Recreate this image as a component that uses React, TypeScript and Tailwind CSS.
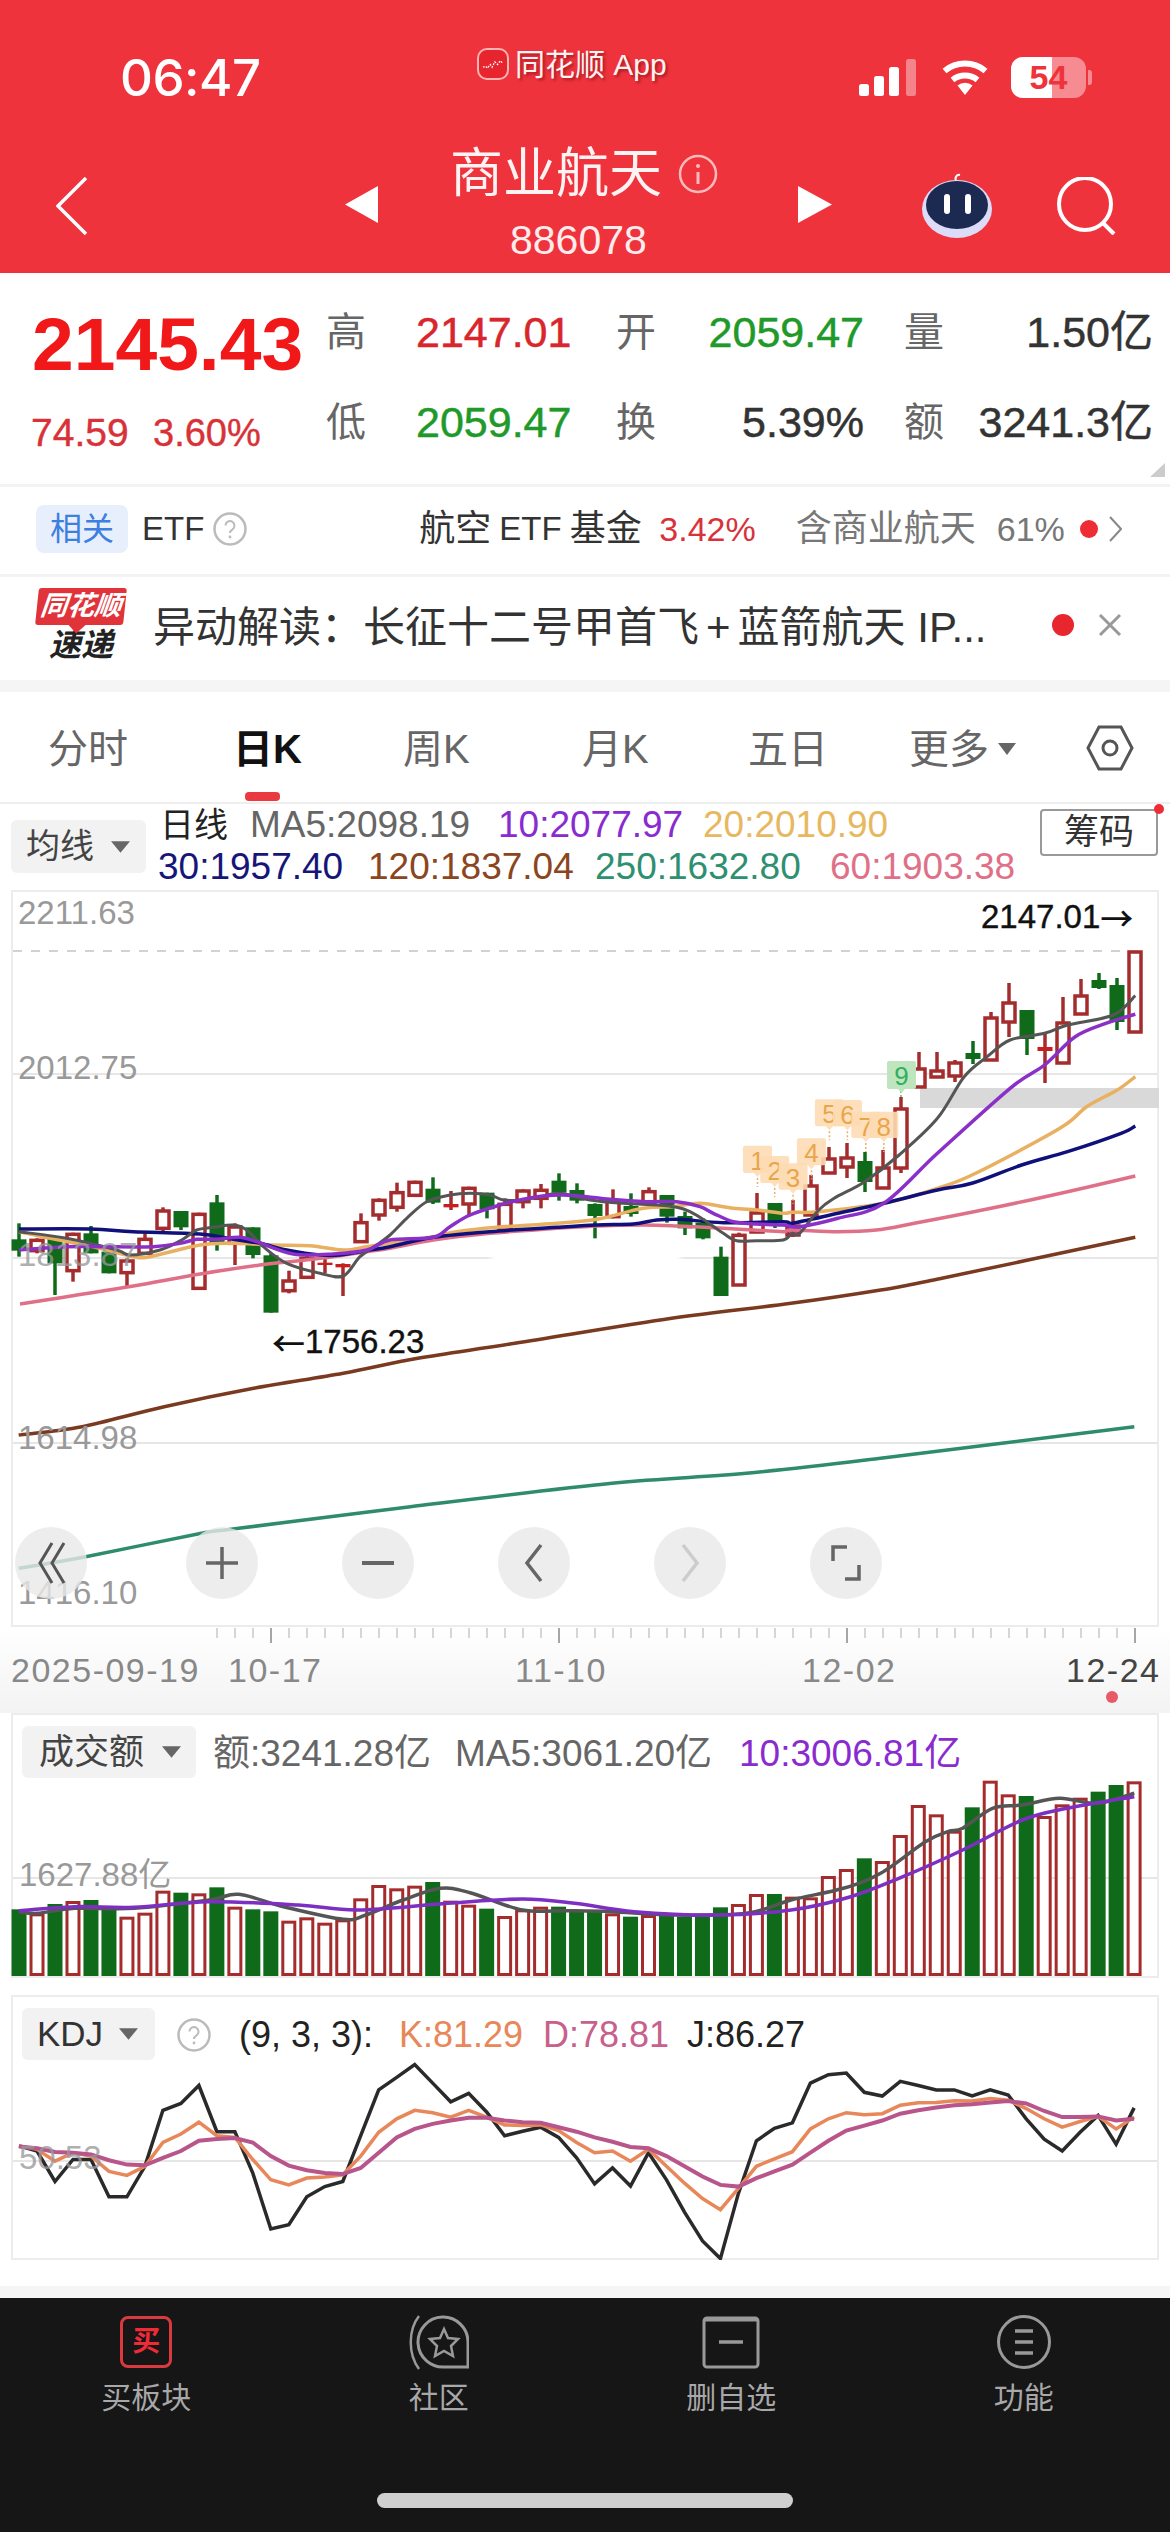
import React from "react";

type P = [number, number];
const z8 = (a: number[]): P[] => pairs(a).map(([x, y]) => [x / 3, 1150 + y / 3]);
const z9 = (a: number[]): P[] => pairs(a).map(([x, y]) => [390 + x / 3, 1150 + y / 3]);
const z4 = (a: number[]): P[] => pairs(a).map(([x, y]) => [570 + x / 2.613, 880 + y / 3]);
const z5 = (a: number[]): P[] => pairs(a).map(([x, y]) => [x / 1.34, 1280 + y / 3]);
const z6 = (a: number[]): P[] => pairs(a).map(([x, y]) => [x / 1.34, 1700 + y / 3]);
const z7 = (a: number[]): P[] => pairs(a).map(([x, y]) => [x / 1.34, 2000 + y / 2.947]);
function pairs(a: number[]): P[] {
  const r: P[] = [];
  for (let i = 0; i < a.length; i += 2) r.push([a[i], a[i + 1]]);
  return r;
}
function smooth(p: P[]): string {
  let d = `M${p[0][0].toFixed(1)} ${p[0][1].toFixed(1)}`;
  for (let i = 0; i < p.length - 1; i++) {
    const a = p[Math.max(0, i - 1)], b = p[i], c = p[i + 1], e = p[Math.min(p.length - 1, i + 2)];
    const c1: P = [b[0] + (c[0] - a[0]) / 6, b[1] + (c[1] - a[1]) / 6];
    const c2: P = [c[0] - (e[0] - b[0]) / 6, c[1] - (e[1] - b[1]) / 6];
    d += `C${c1[0].toFixed(1)} ${c1[1].toFixed(1)} ${c2[0].toFixed(1)} ${c2[1].toFixed(1)} ${c[0].toFixed(1)} ${c[1].toFixed(1)}`;
  }
  return d;
}
const poly = (p: P[]) => p.map(([x, y]) => `${x.toFixed(1)},${y.toFixed(1)}`).join(" ");

const RED = "#a52c2c";
const GREEN = "#0f6b1a";

const c1: [string, number, number, number, number][] = [
  ["G", 220, 268, 302, 320], ["R", 265, 268, 302, 310], ["G", 258, 265, 340, 435], ["R", 248, 250, 362, 395],
  ["G", 228, 250, 310, 310], ["G", 305, 305, 370, 370], ["R", 325, 330, 368, 410], ["R", 250, 265, 310, 315],
  ["R", 172, 180, 235, 245], ["G", 183, 183, 232, 240], ["R", 188, 190, 415, 415], ["G", 135, 157, 280, 302],
  ["R", 220, 228, 280, 345], ["G", 232, 232, 315, 325], ["G", 310, 316, 488, 488], ["R", 362, 390, 422, 430],
  ["R", 318, 322, 382, 385], ["X", 325, 338, 345, 370], ["X", 340, 342, 352, 438], ["R", 190, 215, 275, 278],
  ["R", 145, 148, 195, 212], ["R", 98, 125, 172, 185], ["R", 92, 94, 136, 140], ["G", 82, 116, 158, 162],
  ["X", 123, 162, 172, 180], ["R", 110, 112, 162, 200], ["G", 128, 128, 178, 205], ["R", 145, 160, 240, 242],
  ["R", 118, 120, 155, 175], ["R", 102, 118, 145, 175], ["G", 70, 92, 128, 152], ["G", 100, 120, 152, 160],
  ["G", 160, 162, 198, 265], ["R", 118, 150, 200, 205], ["G", 130, 168, 192, 200], ["R", 112, 122, 160, 165],
  ["G", 135, 135, 200, 218], ["G", 185, 198, 235, 255], ["G", 205, 218, 265, 268], ["G", 290, 320, 438, 438],
  ["R", 248, 253, 405, 408],
];
const c2: [string, number, number, number, number][] = [
  ["R", 1193, 1212, 1232, 1233], ["G", 1203, 1203, 1223, 1228], ["M", 1200, 1225, 1235, 1237], ["R", 1175, 1185, 1215, 1215],
  ["R", 1147, 1158, 1173, 1173], ["R", 1143, 1157, 1167, 1178], ["G", 1152, 1161, 1182, 1192], ["R", 1150, 1167, 1188, 1188],
  ["R", 1097, 1108, 1168, 1173], ["R", 1052, 1068, 1087, 1087], ["R", 1052, 1070, 1077, 1077], ["R", 1060, 1062, 1076, 1082],
  ["G", 1041, 1053, 1059, 1064], ["R", 1012, 1017, 1060, 1060], ["R", 983, 1002, 1022, 1037], ["G", 1010, 1010, 1039, 1055],
  ["X", 1033, 1047, 1051, 1083], ["R", 997, 1022, 1063, 1063], ["R", 979, 995, 1014, 1014], ["G", 973, 980, 988, 989],
  ["G", 978, 985, 1022, 1030], ["R", 951, 951, 1032, 1032],
];
const candles = [
  ...c1.map(([k, a, b, c, d]) => [k, 1150 + a / 3, 1150 + b / 3, 1150 + c / 3, 1150 + d / 3] as [string, number, number, number, number]),
  ...c2,
];

const ma5 = [
  ...z8([57, 245, 200, 265, 350, 300, 390, 315, 480, 300, 545, 270, 590, 240, 640, 232, 700, 225, 740, 240, 790, 290, 860, 340, 960, 370, 1030, 378, 1080, 320, 1130, 285]),
  ...z9([0, 255, 50, 205, 110, 155, 180, 135, 240, 130, 300, 135, 340, 150, 400, 150, 450, 140, 510, 130, 600, 150, 700, 160, 800, 165, 860, 172, 900, 185, 950, 215, 1000, 250, 1040, 272, 1100, 272, 1180, 270]),
  ...z4([580, 1060, 600, 1060, 650, 990, 690, 955, 770, 905, 860, 825, 960, 715, 1030, 590, 1090, 530, 1150, 480, 1240, 460, 1300, 435, 1420, 405, 1477, 347]),
];
const ma10 = [
  ...z8([57, 300, 200, 290, 300, 290, 460, 290, 540, 280, 590, 268, 650, 268, 720, 262, 770, 275, 880, 312, 1000, 312, 1100, 300]),
  ...z9([0, 270, 130, 262, 180, 230, 240, 195, 330, 165, 400, 148, 460, 138, 520, 135, 590, 140, 660, 148, 770, 155, 860, 155, 930, 170, 970, 190, 1030, 215, 1100, 222, 1180, 225]),
  ...z4([600, 1040, 700, 1015, 820, 970, 960, 820, 1150, 625, 1240, 555, 1320, 470, 1400, 430, 1477, 403]),
];
const ma20 = [
  ...z8([57, 245, 150, 265, 280, 290, 400, 320, 450, 320, 600, 285, 700, 280, 820, 285, 930, 287, 1030, 300, 1100, 290]),
  ...z9([0, 280, 130, 260, 200, 245, 320, 232, 500, 220, 620, 208, 760, 175, 850, 170, 930, 160, 1030, 175, 1100, 180, 1180, 190]),
  ...z4([580, 997, 650, 995, 820, 970, 960, 925, 1060, 880, 1280, 745, 1350, 680, 1430, 630, 1477, 590]),
];
const ma30 = [
  ...z8([57, 237, 270, 237, 400, 245, 600, 252, 700, 268, 780, 280, 860, 300, 960, 315, 1020, 315, 1100, 302]),
  ...z9([0, 290, 130, 262, 300, 245, 500, 232, 620, 225, 730, 222, 800, 210, 870, 208, 1000, 218, 1180, 215]),
  ...z4([580, 1030, 700, 1000, 820, 970, 960, 930, 1050, 910, 1180, 855, 1300, 815, 1440, 760, 1477, 738]),
];
const ma60 = [
  ...z8([60, 462, 200, 440, 400, 408, 600, 372, 780, 345, 870, 335, 1000, 320, 1100, 305]),
  ...z9([0, 295, 130, 270, 300, 250, 500, 235, 620, 228, 760, 225, 860, 228, 1000, 235, 1090, 240, 1180, 245]),
  ...z4([580, 1050, 700, 1055, 800, 1050, 900, 1030, 1100, 985, 1300, 935, 1477, 888]),
];
const ma120 = [
  ...z5([25, 465, 110, 440, 220, 380, 340, 325, 460, 280, 560, 235, 690, 190, 900, 115, 1060, 70, 1180, 30]),
  ...z4([950, 1200, 1477, 1072]),
];
const ma250 = z5([25, 865, 115, 830, 270, 760, 320, 745, 550, 680, 820, 610, 1000, 580, 1180, 535, 1520, 440]);

const tags: [number, number, number, string][] = [
  [452, 797, 885, "1"], [497, 828, 915, "2"], [545, 850, 935, "3"], [593, 775, 862, "4"],
  [640, 658, 745, "5"], [687, 660, 745, "6"], [735, 695, 780, "7"], [782, 695, 780, "8"],
];

const volTops = [628, 640, 612, 603, 600, 630, 650, 638, 572, 578, 580, 562, 620, 628, 634, 662, 652, 668, 658, 595, 555, 565, 557, 546, 602, 614, 626, 648, 628, 620, 620, 632, 632, 640, 650, 645, 648, 650, 650, 622, 612, 582, 582, 590, 592, 528, 507, 475, 483, 405, 315, 343, 392, 322, 242, 283, 288, 348, 313, 293, 275, 255, 244];
const volGreen = new Set([0, 2, 4, 5, 9, 11, 13, 14, 23, 26, 30, 31, 32, 34, 36, 37, 38, 39, 42, 47, 53, 56, 60, 61]);
const volMa5 = z6([25, 635, 50, 640, 100, 625, 180, 625, 280, 600, 320, 583, 380, 620, 460, 658, 490, 645, 540, 600, 590, 565, 630, 578, 700, 630, 760, 632, 820, 635, 900, 645, 1000, 640, 1060, 600, 1130, 565, 1180, 520, 1240, 425, 1270, 395, 1290, 385, 1330, 325, 1370, 315, 1420, 295, 1470, 310, 1520, 280]);
const volMa10 = z6([25, 632, 100, 620, 180, 622, 280, 605, 400, 615, 480, 630, 600, 610, 700, 597, 770, 610, 850, 635, 960, 645, 1060, 630, 1140, 590, 1210, 530, 1290, 450, 1370, 360, 1430, 325, 1520, 290]);

const kx = (i: number) => 25.5 + 24.1 * i;
const zipK = (ys: number[]) => z7(ys.flatMap((y, i) => [kx(i), y]));
const kJ = zipK([430, 445, 535, 470, 470, 580, 580, 490, 325, 305, 252, 388, 388, 510, 675, 662, 580, 550, 535, 400, 265, 228, 190, 245, 300, 275, 330, 400, 387, 375, 405, 465, 542, 495, 548, 450, 530, 625, 710, 762, 570, 415, 378, 362, 245, 220, 215, 272, 283, 240, 252, 265, 265, 283, 265, 280, 350, 410, 445, 390, 340, 425, 318]);
const kK = zipK([430, 440, 475, 450, 460, 505, 517, 490, 420, 395, 360, 400, 405, 470, 530, 545, 525, 522, 515, 460, 390, 350, 325, 332, 345, 325, 345, 368, 370, 368, 385, 420, 450, 445, 475, 440, 490, 540, 585, 618, 555, 490, 468, 447, 380, 350, 332, 338, 335, 310, 303, 302, 297, 298, 290, 295, 320, 350, 375, 358, 343, 380, 345]);
const kD = zipK([432, 437, 448, 450, 455, 472, 485, 487, 465, 445, 415, 410, 407, 420, 460, 488, 502, 510, 513, 495, 450, 405, 380, 365, 355, 347, 347, 355, 360, 362, 375, 388, 405, 418, 433, 437, 460, 490, 520, 545, 550, 525, 505, 485, 450, 415, 385, 370, 355, 335, 325, 317, 310, 307, 302, 298, 305, 327, 345, 345, 343, 355, 350]);

function Tri({ className }: { className: string }) {
  return (
    <svg viewBox="0 0 20 12" className={className}>
      <path d="M0 0H20L10 12Z" fill="#666" />
    </svg>
  );
}

function Help({ className }: { className: string }) {
  return (
    <svg viewBox="0 0 34 34" className={className}>
      <circle cx="17" cy="17" r="15.5" fill="none" stroke="#bbb" strokeWidth="2.5" />
      <path d="M12.5 13.5a4.5 4.5 0 1 1 7 3.8c-1.6 1-2.5 1.8-2.5 3.7" fill="none" stroke="#bbb" strokeWidth="2" />
      <circle cx="17" cy="25" r="1.4" fill="#bbb" />
    </svg>
  );
}

function Header() {
  return (
    <header className="h-[273px] bg-[#ef333d] text-white">
      <div className="flex h-[120px] items-start">
        <div className="ml-[120px] mt-[50px] w-[357px] text-[51px] leading-[56px] font-medium font-['Inter','Liberation_Sans',sans-serif] tracking-[-0.5px]">06:47</div>
        <div className="mt-[48px] flex items-start">
          <div className="flex h-[32px] w-[32px] items-center justify-center rounded-[10px] border-2 border-[#ffb3b3] bg-[#e7252f]">
            <svg viewBox="0 0 24 12" className="w-[22px]">
              <path d="M1 9l3-1 2 2 3-4 2 3 3-6 3 3 3-4 2 2" fill="none" stroke="#fff" strokeWidth="1.4" strokeDasharray="2 1.5" />
            </svg>
          </div>
          <div className="ml-[6px] text-[30px] leading-[34px] text-[#fff3f3] [text-shadow:2px_2px_3px_rgba(90,0,0,0.5)]">同花顺 App</div>
        </div>
        <div className="ml-auto mr-[78px] mt-[57px] flex items-start">
          <svg viewBox="0 0 57 37" className="mt-[2px] h-[37px] w-[57px]">
            <rect x="0" y="25" width="10" height="12" rx="2.5" fill="#fff" />
            <rect x="15" y="17" width="10" height="20" rx="2.5" fill="#fff" />
            <rect x="30" y="8" width="10" height="29" rx="2.5" fill="#fff" />
            <rect x="47" y="0" width="10" height="37" rx="2.5" fill="#fff" fillOpacity="0.4" />
          </svg>
          <svg viewBox="0 0 48 36" className="ml-[25px] mt-[2px] h-[36px] w-[48px]">
            <path d="M24 36L16.5 26.5a12 12 0 0 1 15 0Z" fill="#fff" />
            <path d="M11.5 21a20 20 0 0 1 25 0" fill="none" stroke="#fff" strokeWidth="6" />
            <path d="M3.5 12a32 32 0 0 1 41 0" fill="none" stroke="#fff" strokeWidth="6" />
          </svg>
          <div className="relative ml-[22px] h-[41px] w-[75px] overflow-hidden rounded-[12px] bg-[#ffffff70]">
            <div className="h-full w-[41px] bg-white"></div>
            <div className="absolute inset-0 text-center text-[34px] font-bold leading-[41px] text-[#ef333d]">54</div>
          </div>
          <div className="ml-[2px] mt-[13px] h-[15px] w-[4px] rounded-r-[3px] bg-[#ffffff70]"></div>
        </div>
      </div>
      <div className="flex h-[153px] items-start">
        <svg viewBox="0 0 31 58" className="ml-[56px] mt-[57px] h-[58px] w-[31px]">
          <path d="M30 1L2 29l28 28" fill="none" stroke="#fff" strokeWidth="3.5" />
        </svg>
        <svg viewBox="0 0 33 37" className="ml-[258px] mt-[66px] h-[37px] w-[33px]">
          <path d="M33 0V37L0 18.5Z" fill="#fff" />
        </svg>
        <div className="ml-[72px] flex w-[348px] flex-col">
          <div className="mt-[24px] flex items-center">
            <span className="text-[53px] leading-[60px] text-[#fff2f2]">商业航天</span>
            <svg viewBox="0 0 40 40" className="ml-[16px] h-[40px] w-[40px]">
              <circle cx="20" cy="20" r="18" fill="none" stroke="#fbb" strokeWidth="2.5" />
              <path d="M20 18v12" stroke="#fbb" strokeWidth="3" />
              <circle cx="20" cy="12" r="2" fill="#fbb" />
            </svg>
          </div>
          <div className="ml-[60px] mt-[12px] text-[41px] leading-[48px] text-[#ffecec]">886078</div>
        </div>
        <svg viewBox="0 0 34 37" className="mt-[66px] h-[37px] w-[34px]">
          <path d="M0 0V37L34 18.5Z" fill="#fff" />
        </svg>
        <svg viewBox="0 0 70 66" className="ml-[90px] mt-[52px] h-[66px] w-[70px]">
          <path d="M35 10c-3-3-1-8 3-7" fill="none" stroke="#fff" strokeWidth="2" />
          <ellipse cx="35" cy="37" rx="35" ry="29" fill="#dcdcf8" />
          <ellipse cx="35" cy="33" rx="31" ry="24" fill="#1c2a52" />
          <rect x="22" y="22" width="6" height="20" rx="3" fill="#fff" />
          <rect x="43" y="22" width="6" height="20" rx="3" fill="#fff" />
        </svg>
        <svg viewBox="0 0 60 58" className="ml-[64px] mt-[57px] h-[58px] w-[60px]">
          <circle cx="29" cy="27" r="26" fill="none" stroke="#fff" strokeWidth="4" />
          <path d="M47 46l11 11" stroke="#fff" strokeWidth="4" />
        </svg>
      </div>
    </header>
  );
}

function Quote() {
  const label = "text-[40px] leading-[48px] text-[#666]";
  const val = "text-[43px] leading-[48px] [-webkit-text-stroke:0.5px]";
  return (
    <section className="relative flex h-[211px] bg-white">
      <div className="ml-[31px] w-[295px]">
        <div className="mt-[31px] ml-[1px] text-[75px] font-bold leading-[80px] text-[#f01818]">2145.43</div>
        <div className="mt-[27px] flex text-[39px] leading-[44px] text-[#d83238] [-webkit-text-stroke:0.4px]">
          <span className="w-[122px]">74.59</span>
          <span className="text-[38px]">3.60%</span>
        </div>
      </div>
      <div className="mt-[35px] grid grid-cols-[90px_200px_90px_158px_289px] grid-rows-[90px_48px]">
        <div className={label}>高</div>
        <div className={`${val} text-[#d8262c]`}>2147.01</div>
        <div className={label}>开</div>
        <div className={`${val} text-right text-[#1f9a2a]`}>2059.47</div>
        <div className="flex justify-between pl-[40px]">
          <span className={label}>量</span>
          <span className={`${val} text-[#333]`}>1.50亿</span>
        </div>
        <div className={label}>低</div>
        <div className={`${val} text-[#1f9a2a]`}>2059.47</div>
        <div className={label}>换</div>
        <div className={`${val} text-right text-[#333]`}>5.39%</div>
        <div className="flex justify-between pl-[40px]">
          <span className={label}>额</span>
          <span className={`${val} text-[#333]`}>3241.3亿</span>
        </div>
      </div>
      <svg viewBox="0 0 15 14" className="absolute bottom-[7px] right-[5px] h-[14px] w-[15px]">
        <path d="M15 0V14H0Z" fill="#ccc" />
      </svg>
    </section>
  );
}

function EtfRow() {
  return (
    <section className="flex h-[90px] items-center border-t-[3px] border-[#f3f3f3] bg-white pb-[3px]">
      <div className="ml-[36px] flex h-[48px] w-[92px] items-center justify-center rounded-[8px] bg-[#e8effc] text-[32px] text-[#3d7fe0]">相关</div>
      <div className="ml-[14px] text-[33px] text-[#333]">ETF</div>
      <Help className="ml-[9px] h-[34px] w-[34px]" />
      <div className="ml-[172px] flex w-[240px] items-center text-[36px] whitespace-nowrap text-[#333]">
        航空<span className="mx-[8px] text-[33px]">ETF</span>基金
      </div>
      <div className="text-[34px] text-[#d8323a]">3.42%</div>
      <div className="ml-[40px] w-[201px] text-[36px] text-[#777]">含商业航天</div>
      <div className="text-[34px] text-[#777]">61%</div>
      <div className="ml-[15px] h-[18px] w-[18px] rounded-full bg-[#ef2b35]"></div>
      <svg viewBox="0 0 13 26" className="ml-[11px] h-[26px] w-[13px]">
        <path d="M1 1l11 12L1 25" fill="none" stroke="#888" strokeWidth="2" />
      </svg>
    </section>
  );
}

function AlertRow() {
  return (
    <section className="flex h-[106px] items-start border-t-[3px] border-[#f3f3f3] bg-white">
      <div className="ml-[37px] mt-[11px] flex w-[88px] flex-col items-center">
        <div className="relative h-[37px] w-[88px] -skew-x-6 rounded-[3px] bg-[#e0333a] text-center text-[27px] font-bold italic leading-[37px] text-white whitespace-nowrap">
          同花顺
          <span className="absolute -bottom-[6px] left-[36px] h-[12px] w-[12px] rotate-45 bg-[#e0333a]"></span>
        </div>
        <div className="mt-[6px] text-[32px] font-bold italic leading-[28px] text-[#222]">速递</div>
      </div>
      <div className="ml-[28px] mt-[28px] w-[850px] text-[42px] leading-[46px] whitespace-nowrap text-[#333]">
        异动解读：长征十二号甲首飞<span className="mx-[7px]">+</span>蓝箭航天 IP...
      </div>
      <div className="ml-[49px] mt-[37px] h-[22px] w-[22px] shrink-0 rounded-full bg-[#e8262e]"></div>
      <svg viewBox="0 0 24 24" className="ml-[24px] mt-[36px] h-[24px] w-[24px] shrink-0">
        <path d="M2 2l20 20M22 2L2 22" stroke="#999" strokeWidth="3" />
      </svg>
    </section>
  );
}

function Tabs() {
  const t = "text-[40px] leading-[48px] text-[#666]";
  return (
    <section className="relative flex h-[112px] items-start border-b-2 border-[#eee] bg-white pl-[48px] pt-[33px]">
      <div className={`w-[185px] ${t}`}>分时</div>
      <div className="w-[170px] text-[40px] font-bold leading-[48px] text-[#111]">日K</div>
      <div className={`w-[179px] ${t}`}>周K</div>
      <div className={`w-[166px] ${t}`}>月K</div>
      <div className={`w-[161px] ${t}`}>五日</div>
      <div className={`flex w-[177px] items-center ${t}`}>
        更多
        <svg viewBox="0 0 18 12" className="ml-[9px] h-[12px] w-[18px]">
          <path d="M0 0H18L9 12Z" fill="#666" />
        </svg>
      </div>
      <svg viewBox="0 0 48 46" className="h-[46px] w-[48px]">
        <path d="M13 2h22l11 21-11 21H13L2 23Z" fill="none" stroke="#555" strokeWidth="3" />
        <circle cx="24" cy="23" r="7" fill="none" stroke="#555" strokeWidth="3" />
      </svg>
      <div className="absolute bottom-[1px] left-[245px] h-[9px] w-[35px] rounded-[4px] bg-[#e93a3f]"></div>
    </section>
  );
}

function MaHeader() {
  return (
    <section className="relative flex h-[86px] items-start bg-white">
      <div className="ml-[11px] mt-[16px] flex h-[53px] w-[135px] items-center rounded-[6px] bg-[#f2f2f2] pl-[15px] text-[34px] text-[#444]">
        均线
        <Tri className="ml-[17px] h-[12px] w-[19px]" />
      </div>
      <div className="ml-[12px] text-[37px] leading-[42px] whitespace-nowrap">
        <div className="flex">
          <span className="w-[92px] pl-[2px] text-[34px] text-[#222]">日线</span>
          <span className="w-[248px] text-[#666]">MA5:2098.19</span>
          <span className="w-[205px] text-[#8a2bd0]">10:2077.97</span>
          <span className="text-[#e8b860]">20:2010.90</span>
        </div>
        <div className="flex">
          <span className="w-[210px] text-[#16167a]">30:1957.40</span>
          <span className="w-[227px] text-[#8b4520]">120:1837.04</span>
          <span className="w-[235px] text-[#2e9070]">250:1632.80</span>
          <span className="text-[#e07088]">60:1903.38</span>
        </div>
      </div>
      <div className="absolute left-[1040px] top-[5px] flex h-[47px] w-[118px] items-center justify-center rounded-[4px] border-2 border-[#999] text-[35px] text-[#333]">筹码</div>
      <div className="absolute left-[1154px] top-[0px] h-[10px] w-[10px] rounded-full bg-[#ef2b35]"></div>
    </section>
  );
}

const ctrlBtn = "absolute top-[637px] flex h-[72px] w-[72px] items-center justify-center rounded-full bg-[#e8e8e8cc]";

function MainChart() {
  return (
    <section className="relative ml-[11px] h-[737px] w-[1148px] overflow-hidden bg-white outline-2 -outline-offset-2 outline-[#ececec]">
      <svg viewBox="11 890 1148 737" className="absolute left-0 top-0 h-[737px] w-[1148px]">
        <path d="M13 1074H1157M13 1258H1157M13 1443H1157" stroke="#e6e6e6" strokeWidth="2" />
        <path d="M13 951H1145" stroke="#c9c3b8" strokeWidth="1.5" strokeDasharray="9 9" />
        <rect x="920" y="1088" width="239" height="20" fill="#d9d9d9" />
        <g>
          {candles.map(([k, a, b, c, d], i) => {
            const x = 19 + 18 * i;
            if (k === "G")
              return (
                <g key={i}>
                  <line x1={x} x2={x} y1={a} y2={d} stroke={GREEN} strokeWidth="3.500" />
                  <rect x={x - 7.5} y={b} width="15" height={c - b} fill={GREEN} />
                </g>
              );
            if (k === "X")
              return (
                <g key={i}>
                  <line x1={x} x2={x} y1={a} y2={d} stroke={RED} strokeWidth="3.500" />
                  <rect x={x - 7.5} y={b} width="15" height={c - b} fill="#c81e1e" />
                </g>
              );
            return (
              <g key={i}>
                <line x1={x} x2={x} y1={a} y2={b} stroke={RED} strokeWidth="3.500" />
                <line x1={x} x2={x} y1={c} y2={d} stroke={RED} strokeWidth="3.500" />
                <rect x={x - 6} y={b + 1} width="12" height={c - b - 1} fill={k === "M" ? "#d63aa0" : "#fff"} stroke={RED} strokeWidth="3.500" />
              </g>
            );
          })}
        </g>
        <path d={smooth(ma250)} fill="none" stroke="#2e8b6e" strokeWidth="3.500" />
        <path d={smooth(ma120)} fill="none" stroke="#7a3a20" strokeWidth="3.500" />
        <path d={smooth(ma60)} fill="none" stroke="#e07088" strokeWidth="3.500" />
        <path d={smooth(ma20)} fill="none" stroke="#e8b060" strokeWidth="3.500" />
        <path d={smooth(ma30)} fill="none" stroke="#10107a" strokeWidth="3.500" />
        <path d={smooth(ma5)} fill="none" stroke="#555" strokeWidth="3" />
        <path d={smooth(ma10)} fill="none" stroke="#8a30c8" strokeWidth="3.500" />
        {tags.map(([x, t, b, n]) => {
          const L = 570 + x / 2.613, T = 880 + t / 3, B = 880 + b / 3;
          return (
            <g key={n}>
              <line x1={L + 14.5} x2={L + 14.5} y1={B + 3} y2={B + 12} stroke="#e8b070" strokeWidth="1.5" strokeDasharray="2 2" />
              <path d={`M${L} ${T + 2}q0 -2 2 -2h25q2 0 2 2v${B - T - 6}q0 2 -2 2h-9l-3.500 4 -3.500 -4h-9q-2 0 -2 -2Z`} fill="#fddcb4" fillOpacity="0.9" />
              <text x={L + 14.5} y={T + 24} textAnchor="middle" fontSize="26" fill="#eaa54b" fontFamily="Liberation Sans">{n}</text>
            </g>
          );
        })}
        <g>
          <line x1="901" x2="901" y1="1091" y2="1097" stroke="#5fb56f" strokeWidth="1.5" strokeDasharray="2 2" />
          <path d="M887 1063q0 -2 2 -2h25q2 0 2 2v24q0 2 -2 2h-9l-3.500 4 -3.500 -4h-9q-2 0 -2 -2Z" fill="#bfe5bf" />
          <text x="901.500" y="1085" textAnchor="middle" fontSize="26" fill="#2eb060" fontFamily="Liberation Sans">9</text>
        </g>
      </svg>
      <div className="absolute left-[480px] top-[358px] h-[38px] w-[190px] bg-white blur-[3px]"></div>
      <div className="absolute left-[7px] top-[4px] text-[33px] leading-[38px] text-[#999]">2211.63</div>
      <div className="absolute left-[7px] top-[159px] text-[33px] leading-[38px] text-[#999]">2012.75</div>
      <div className="absolute left-[7px] top-[346px] text-[33px] leading-[38px] text-[#99999ccc]">1813.87</div>
      <div className="absolute left-[7px] top-[529px] text-[33px] leading-[38px] text-[#999]">1614.98</div>
      <div className="absolute left-[7px] top-[684px] text-[33px] leading-[38px] text-[#999]">1416.10</div>
      <div className="absolute left-[970px] top-[8px] flex text-[33px] font-medium leading-[38px] text-[#111] [-webkit-text-stroke:0.4px]">
        2147.01<span className="font-['Noto_Sans_CJK_SC'] [-webkit-text-stroke:0px]">→</span>
      </div>
      <div className="absolute left-[261px] top-[433px] flex text-[33px] font-medium leading-[38px] text-[#111] [-webkit-text-stroke:0.4px]">
        <span className="font-['Noto_Sans_CJK_SC'] [-webkit-text-stroke:0px]">←</span>1756.23
      </div>
      <div className={`${ctrlBtn} left-[4px]`}>
        <svg viewBox="0 0 36 48" className="h-[48px] w-[36px]"><path d="M19 4L7 24l12 20M31 4L19 24l12 20" fill="none" stroke="#555" strokeWidth="3" /></svg>
      </div>
      <div className={`${ctrlBtn} left-[175px]`}>
        <svg viewBox="0 0 36 48" className="h-[48px] w-[36px]"><path d="M18 8v32M2 24h32" fill="none" stroke="#666" strokeWidth="3.500" /></svg>
      </div>
      <div className={`${ctrlBtn} left-[331px]`}>
        <svg viewBox="0 0 36 48" className="h-[48px] w-[36px]"><path d="M2 24h32" fill="none" stroke="#666" strokeWidth="4" /></svg>
      </div>
      <div className={`${ctrlBtn} left-[487px]`}>
        <svg viewBox="0 0 36 48" className="h-[48px] w-[36px]"><path d="M25 6L11 24l14 18" fill="none" stroke="#666" strokeWidth="3.500" /></svg>
      </div>
      <div className={`${ctrlBtn} left-[643px]`}>
        <svg viewBox="0 0 36 48" className="h-[48px] w-[36px]"><path d="M11 6l14 18-14 18" fill="none" stroke="#ccc" strokeWidth="3.500" /></svg>
      </div>
      <div className={`${ctrlBtn} left-[799px]`}>
        <svg viewBox="0 0 36 48" className="h-[48px] w-[36px]"><path d="M19 8H5v14M17 40h14V26" fill="none" stroke="#666" strokeWidth="3.500" /></svg>
      </div>
    </section>
  );
}

function DateAxis() {
  const ticks = Array.from({ length: 52 }, (_, i) => 271 + 18 * (i - 3));
  return (
    <section className="h-[86px] bg-linear-to-b from-white to-[#f3f3f3]">
      <svg viewBox="0 0 1170 16" className="h-[16px] w-[1170px]">
        {ticks.map((x) => {
          const major = (x - 271) % 288 === 0;
          return <line key={x} x1={x} x2={x} y1="1" y2={major ? 16 : 11} stroke={major ? "#888" : "#c8c8c8"} strokeWidth="1.5" />;
        })}
      </svg>
      <div className="ml-[11px] mt-[8px] flex text-[34px] leading-[38px] text-[#888] tracking-[1.5px]">
        <span className="w-[217px]">2025-09-19</span>
        <span className="w-[287px]">10-17</span>
        <span className="w-[287px]">11-10</span>
        <span className="w-[264px]">12-02</span>
        <span className="text-[#444]">12-24</span>
      </div>
      <div className="ml-[1106px] mt-[2px] h-[12px] w-[12px] rounded-full bg-[#e85a68]"></div>
    </section>
  );
}

function VolumeChart() {
  return (
    <section className="relative ml-[11px] h-[265px] w-[1148px] overflow-hidden bg-white outline-2 -outline-offset-2 outline-[#ececec]">
      <svg viewBox="11 1713 1148 265" className="absolute left-0 top-0 h-[265px] w-[1148px]">
        <path d="M13 1878H1157" stroke="#e6e6e6" strokeWidth="2" />
        {volTops.map((t, i) => {
          const x = (25.5 + 24.1 * i) / 1.34;
          const y = 1700 + t / 3;
          return volGreen.has(i) ? (
            <rect key={i} x={x - 7.5} y={y} width="15" height={1976 - y} fill={GREEN} />
          ) : (
            <rect key={i} x={x - 6} y={y + 1.5} width="12" height={1974.5 - y - 1.5} fill="#fff" stroke={RED} strokeWidth="3" />
          );
        })}
        <path d={smooth(volMa5)} fill="none" stroke="#555" strokeWidth="3.500" />
        <path d={smooth(volMa10)} fill="none" stroke="#7c2fc0" strokeWidth="3.500" />
      </svg>
      <div className="absolute left-[11px] top-[13px] flex h-[52px] w-[174px] items-center rounded-[6px] bg-[#f2f2f2] pl-[17px] text-[35px] text-[#444]">
        成交额
        <Tri className="ml-[18px] h-[12px] w-[19px]" />
      </div>
      <div className="absolute left-[202px] top-[22px] flex text-[37px] leading-[38px] whitespace-nowrap text-[#666]">
        <span className="w-[242px]">额:3241.28亿</span>
        <span className="w-[284px]">MA5:3061.20亿</span>
        <span className="text-[#8a2bd0]">10:3006.81亿</span>
      </div>
      <div className="absolute left-[8px] top-[143px] text-[33px] leading-[38px] text-[#999]">1627.88亿</div>
    </section>
  );
}

function KdjChart() {
  return (
    <section className="relative ml-[11px] mt-[17px] h-[265px] w-[1148px] overflow-hidden bg-white outline-2 -outline-offset-2 outline-[#ececec]">
      <svg viewBox="11 1995 1148 265" className="absolute left-0 top-0 h-[265px] w-[1148px]">
        <path d="M13 2161H1157" stroke="#e6e6e6" strokeWidth="2" />
        <polyline points={poly(kJ)} fill="none" stroke="#2a2a2a" strokeWidth="3.500" />
        <polyline points={poly(kK)} fill="none" stroke="#e8875a" strokeWidth="3.500" />
        <polyline points={poly(kD)} fill="none" stroke="#b8558a" strokeWidth="4" />
      </svg>
      <div className="absolute left-[11px] top-[13px] flex h-[52px] w-[133px] items-center rounded-[6px] bg-[#f2f2f2] pl-[15px] text-[35px] text-[#333]">
        KDJ
        <Tri className="ml-[16px] h-[12px] w-[19px]" />
      </div>
      <Help className="absolute left-[166px] top-[23px] h-[34px] w-[34px]" />
      <div className="absolute left-[228px] top-[21px] flex text-[36px] leading-[38px] whitespace-nowrap text-[#222]">
        <span className="w-[160px]">(9, 3, 3):</span>
        <span className="w-[144px] text-[#e8875a]">K:81.29</span>
        <span className="w-[144px] text-[#c8608c]">D:78.81</span>
        <span>J:86.27</span>
      </div>
      <div className="absolute left-[8px] top-[144px] text-[33px] leading-[38px] text-[#99999ccc]">50.53</div>
    </section>
  );
}

function TabBar() {
  const lab = "mt-[10px] text-[30px] leading-[36px] text-[#a8a8a8]";
  return (
    <nav className="h-[234px] bg-[#161616]">
      <div className="grid grid-cols-4 pt-[16px]">
        <div className="flex flex-col items-center">
          <div className="flex h-[56px] items-center">
            <div className="flex h-[52px] w-[52px] items-center justify-center rounded-[8px] border-[3px] border-[#d83a40] text-[28px] font-bold leading-none text-[#ef2b38]">买</div>
          </div>
          <div className={lab}>买板块</div>
        </div>
        <div className="flex flex-col items-center">
          <svg viewBox="0 0 60 56" className="h-[56px] w-[60px]">
            <path d="M10 2C-1 16 -1 40 10 55" fill="none" stroke="#999" strokeWidth="2.500" />
            <path d="M59 53H36A25 25 0 1 1 59 28Z" fill="none" stroke="#999" strokeWidth="3" />
            <path d="M35 15l4 9 10 1-7 7 2 10-9-5-9 5 2-10-7-7 10-1Z" fill="none" stroke="#999" strokeWidth="2.500" />
          </svg>
          <div className={lab}>社区</div>
        </div>
        <div className="flex flex-col items-center">
          <svg viewBox="0 0 58 56" className="h-[56px] w-[58px]">
            <rect x="2" y="4" width="54" height="49" rx="3" fill="none" stroke="#999" strokeWidth="3" />
            <path d="M2 6h54" stroke="#999" strokeWidth="3" />
            <path d="M17 28h24" stroke="#999" strokeWidth="3.500" />
          </svg>
          <div className={lab}>删自选</div>
        </div>
        <div className="flex flex-col items-center">
          <svg viewBox="0 0 56 56" className="h-[56px] w-[56px]">
            <circle cx="28" cy="28" r="25.500" fill="none" stroke="#999" strokeWidth="3" />
            <path d="M19 17h18M19 28h18M19 39h18" stroke="#999" strokeWidth="3.500" />
          </svg>
          <div className={lab}>功能</div>
        </div>
      </div>
      <div className="ml-[377px] mt-[77px] h-[15px] w-[416px] rounded-full bg-[#cfcfcf]"></div>
    </nav>
  );
}

export default function App() {
  return (
    <div className="h-[2532px] w-[1170px] overflow-hidden bg-white font-['Liberation_Sans','Noto_Sans_CJK_SC',sans-serif]">
      <Header />
      <Quote />
      <EtfRow />
      <AlertRow />
      <div className="h-[12px] bg-[#f5f5f5]"></div>
      <Tabs />
      <MaHeader />
      <MainChart />
      <DateAxis />
      <VolumeChart />
      <KdjChart />
      <div className="h-[26px] bg-white"></div>
      <div className="h-[12px] bg-[#f5f5f5]"></div>
      <TabBar />
    </div>
  );
}
